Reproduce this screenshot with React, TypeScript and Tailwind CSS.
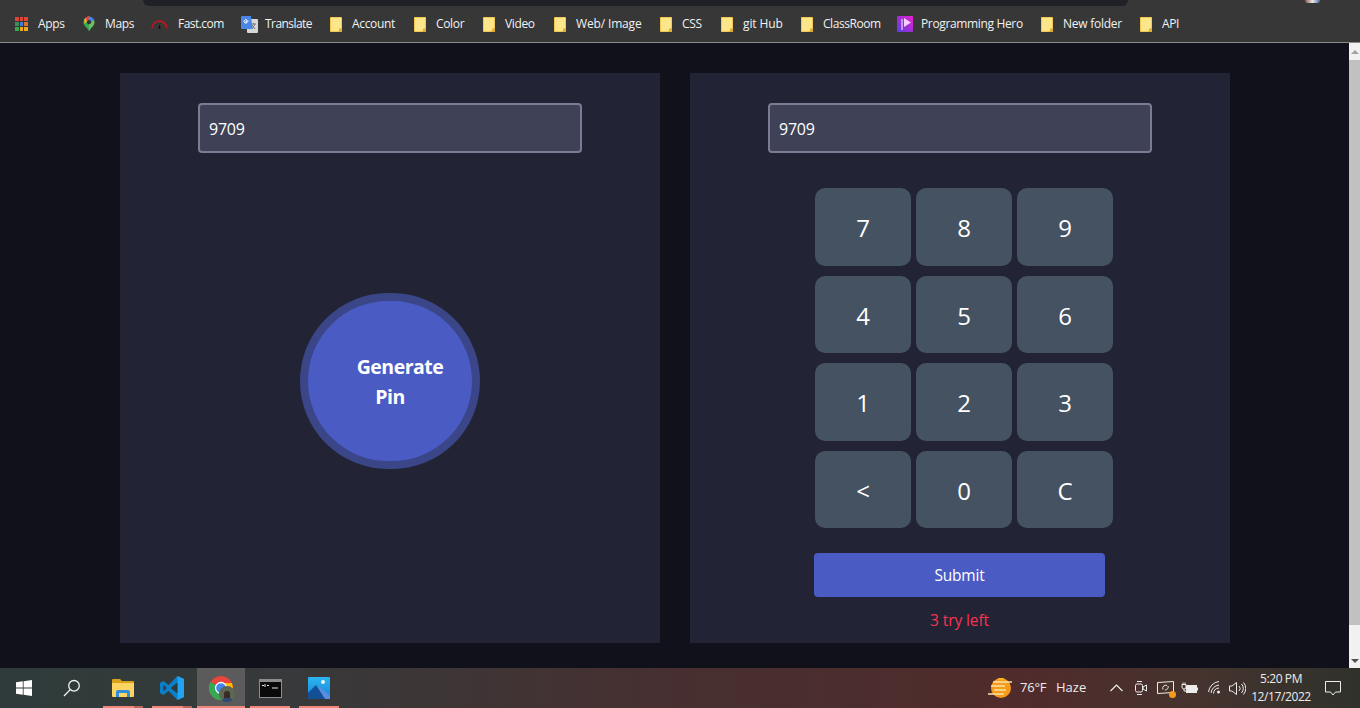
import type { ReactNode } from "react";

const FONT = "font-['Open_Sans','Noto_Sans',sans-serif]";

function FolderIcon() {
  return (
    <svg width="12" height="15" viewBox="0 0 12 15" className="shrink-0">
      <path d="M.5.5h11v11l-3 3H.5z" fill="#fde58a" stroke="#f4c84f" />
      <path d="M9 15v-3.500h3V15z" fill="#e2ad34" />
    </svg>
  );
}

function AppsIcon() {
  const colors = ["#d9473b", "#d9473b", "#d9473b", "#3f8a5c", "#3b7fdc", "#e0702e", "#34a853", "#f0a81e", "#f0a81e"];
  return (
    <div className="grid grid-cols-3 gap-px w-[13px] h-[14px] shrink-0">
      {colors.map((c, i) => (
        <span key={i} style={{ backgroundColor: c }} />
      ))}
    </div>
  );
}

function MapsIcon() {
  return (
    <svg width="12" height="16" viewBox="0 0 13 16" className="shrink-0">
      <path d="M6.500 0A6 6 0 0 0 .5 6c0 2 1 3.500 2.500 5.200 1.500 1.700 3 3 3.500 4.800L6.500 6z" fill="#34a853" />
      <path d="M6.500 16c.5-1.800 2-3.100 3.500-4.800C11.500 9.500 12.500 8 12.500 6c0-1-.3-2-.8-2.800L6.500 7z" fill="#6cbf5b" />
      <path d="M1.500 3A6 6 0 0 1 7 0l-.5 3.500L1.500 8z" fill="#f0b429" />
      <path d="M3 1a6 6 0 0 1 4-1l-.5 3.500L4 5z" fill="#e8453c" />
      <path d="M7 0a6 6 0 0 1 5 3.500L8 6 6 3z" fill="#4285f4" />
      <circle cx="6.500" cy="6" r="2.200" fill="#2f2f2f" />
    </svg>
  );
}

function FastIcon() {
  return (
    <svg width="17" height="10" viewBox="0 0 17 10" className="shrink-0">
      <path d="M1 9.500a7.500 7.500 0 0 1 15 0" fill="none" stroke="#c4161f" strokeWidth="1.500" />
      <path d="M10 2.500l1.500 1M12 4l1 1.500M13.500 6.500l.5 1" stroke="#c4161f" />
      <path d="M7.500 9.800 8.500 5l1 4.800z" fill="#0c0c0c" />
    </svg>
  );
}

function TranslateIcon() {
  return (
    <svg width="17" height="17" viewBox="0 0 17 17" className="shrink-0">
      <rect x="6" y="3" width="11" height="14" rx="1" fill="#d7d7d7" />
      <path d="M10 8h5M12.500 7v1M11 13l3-5M11 9l3 4" stroke="#777" fill="none" />
      <path d="M1 0h9l1.500 13H1a1 1 0 0 1-1-1V1a1 1 0 0 1 1-1z" fill="#4a86e8" />
      <path d="M7.500 5H5v1.200h1.300A1.700 1.700 0 1 1 6 4.200" stroke="#fff" strokeWidth="1" fill="none" />
    </svg>
  );
}

function HeroIcon() {
  return (
    <svg width="16" height="16" viewBox="0 0 16 16" className="shrink-0">
      <defs>
        <linearGradient id="hero" x1="0" y1="1" x2="1" y2="0">
          <stop offset="0" stopColor="#5b3fe0" />
          <stop offset="1" stopColor="#e81fd0" />
        </linearGradient>
      </defs>
      <rect width="16" height="16" rx="1" fill="url(#hero)" />
      <path d="M5 3v11" stroke="#e9d5ff" strokeWidth="1.200" />
      <path d="M7 2l7 4.500L7 11z" fill="#f5d0fe" />
    </svg>
  );
}

const bookmarks: { label: string; icon: ReactNode; cell: string; text: string }[] = [
  { label: "Apps", icon: <AppsIcon />, cell: "w-[68px]", text: "ml-[10px] tracking-[-0.35px]" },
  { label: "Maps", icon: <MapsIcon />, cell: "w-[68px]", text: "ml-[10px] tracking-[-0.35px]" },
  { label: "Fast.com", icon: <FastIcon />, cell: "w-[90px]", text: "ml-[10px] tracking-[-0.55px]" },
  { label: "Translate", icon: <TranslateIcon />, cell: "w-[89px]", text: "ml-[7px] tracking-[-0.55px]" },
  { label: "Account", icon: <FolderIcon />, cell: "w-[84px]", text: "ml-[10px] tracking-[-0.35px]" },
  { label: "Color", icon: <FolderIcon />, cell: "w-[69px]", text: "ml-[10px] tracking-[-0.35px]" },
  { label: "Video", icon: <FolderIcon />, cell: "w-[71px]", text: "ml-[10px] tracking-[-0.35px]" },
  { label: "Web/ Image", icon: <FolderIcon />, cell: "w-[106px]", text: "ml-[10px] tracking-[-0.15px]" },
  { label: "CSS", icon: <FolderIcon />, cell: "w-[61px]", text: "ml-[10px] tracking-[-0.35px]" },
  { label: "git Hub", icon: <FolderIcon />, cell: "w-[80px]", text: "ml-[10px] tracking-[-0.1px]" },
  { label: "ClassRoom", icon: <FolderIcon />, cell: "w-[96px]", text: "ml-[10px] tracking-[-0.45px]" },
  { label: "Programming Hero", icon: <HeroIcon />, cell: "w-[144px]", text: "ml-[8px] tracking-[-0.35px]" },
  { label: "New folder", icon: <FolderIcon />, cell: "w-[99px]", text: "ml-[10px] tracking-[-0.25px]" },
  { label: "API", icon: <FolderIcon />, cell: "w-[60px]", text: "ml-[10px] tracking-[-0.35px]" },
];

function TopBar() {
  return (
    <div className="shrink-0 bg-[#373737] border-b border-[#8c8c8c]">
      <div className="flex h-[6px]">
        <div className="ml-[143px] w-[985px] rounded-b-[10px] bg-[#202127]" />
        <div className="ml-[177px] w-[15px] h-[3px] rounded-b-full bg-[linear-gradient(90deg,#8a5a4a,#e8e8e8,#4a6aa8)]" />
      </div>
      <div className="flex items-center h-[36px] pl-[15px]">
        {bookmarks.map((b) => (
          <div key={b.label} className={`flex items-center shrink-0 ${b.cell}`}>
            {b.icon}
            <span className={`text-[12px] leading-none text-[#f1f1f1] whitespace-nowrap ${b.text}`}>{b.label}</span>
          </div>
        ))}
      </div>
    </div>
  );
}

function PinInput() {
  return (
    <input
      readOnly
      value="9709"
      className="w-[384px] h-[50px] pl-[9px] pr-[10px] pt-[2px] rounded-[4px] border-2 border-[#7c7b95] bg-[#3f4256] text-[16px] tracking-[-0.25px] text-white outline-none"
    />
  );
}

const keys = ["7", "8", "9", "4", "5", "6", "1", "2", "3", "<", "0", "C"];

function Panels() {
  return (
    <main className="flex-1 flex gap-[30px] pl-[120px] pt-[30px]">
      <section className="w-[540px] h-[570px] bg-[#222436] flex flex-col items-center pt-[30px]">
        <PinInput />
        <button className="mt-[140px] w-[180px] h-[176px] pt-[2px] rounded-full border-[8px] border-[#3a4687] bg-[#4a5bc4] text-white text-[19.5px] font-bold leading-[30px] tracking-[-0.5px] flex flex-col items-center justify-center">
          <span className="pl-5">Generate</span>
          <span>Pin</span>
        </button>
      </section>
      <section className="w-[540px] h-[570px] bg-[#222436] flex flex-col items-center pt-[30px]">
        <PinInput />
        <div className="mt-[35px] ml-2 grid grid-cols-[96px_96px_96px] auto-rows-[77.5px] gap-x-[5px] gap-y-[10px]">
          {keys.map((k) => (
            <button key={k} className="pt-[3px] rounded-[10px] bg-[#445261] text-white text-[24px] flex items-center justify-center">
              {k}
            </button>
          ))}
        </div>
        <button className="mt-[25px] mr-px w-[291px] h-[44px] pt-[2px] rounded-[4px] bg-[#4a5bc4] text-white text-[15.5px] tracking-[-0.2px]">
          Submit
        </button>
        <p className="mt-[11px] mr-px text-[15.5px] leading-[24px] tracking-[-0.1px] text-[#f8334f]">3 try left</p>
      </section>
    </main>
  );
}

function Scrollbar() {
  return (
    <div className="w-[11px] bg-[#f1f1f1] flex flex-col items-center shrink-0">
      <div className="h-[17px] flex items-center">
        <div className="w-0 h-0 border-x-[4px] border-x-transparent border-b-[4px] border-b-[#a3a3a3]" />
      </div>
      <div className="w-full h-[565px] bg-[#c1c1c1]" />
      <div className="flex-1 flex items-end pb-[5px]">
        <div className="w-0 h-0 border-x-[4px] border-x-transparent border-t-[4px] border-t-[#505050]" />
      </div>
    </div>
  );
}

function WindowsIcon() {
  return (
    <svg width="16" height="16" viewBox="0 0 16 16">
      <path d="M0 2.300 6.800 1.300v6.300H0zM7.600 1.200 16 0v7.600H7.600zM0 8.400h6.800v6.300L0 13.700zM7.600 8.400H16V16l-8.400-1.200z" fill="#fff" />
    </svg>
  );
}

function SearchIcon() {
  return (
    <svg width="18" height="18" viewBox="0 0 18 18" fill="none" stroke="#f2f2f2" strokeWidth="1.300">
      <circle cx="11" cy="6.800" r="5.300" />
      <path d="M7.200 10.600 1 17" />
    </svg>
  );
}

function ExplorerIcon() {
  return (
    <svg width="22" height="18" viewBox="0 0 22 18">
      <path d="M0 1a1 1 0 0 1 1-1h7l2 2h11a1 1 0 0 1 1 1v3H0z" fill="#d9a21b" />
      <path d="M0 4h22v13a1 1 0 0 1-1 1H1a1 1 0 0 1-1-1z" fill="#fcd462" />
      <path d="M4 18v-5a2 2 0 0 1 2-2h10a2 2 0 0 1 2 2v5h-3v-4H7v4z" fill="#2f8fd8" />
    </svg>
  );
}

function VsCodeIcon() {
  return (
    <svg width="24" height="24" viewBox="0 0 24 24">
      <path d="M17.500 0 24 3v18l-6.500 3-9-9-5 4L0 17V7l3.500-2 5 4z" fill="#0a7fcb" />
      <path d="M17.500 0 24 3v18l-6.500 3z" fill="#22a5f1" />
      <path d="M17.500 6.500v11L10.500 12z" fill="#2f3a3a" />
      <path d="m3.500 8.500 3 3.500-3 3.500z" fill="#2f3a3a" />
    </svg>
  );
}

function ChromeIcon() {
  return (
    <div className="relative w-[24px] h-[24px]">
      <svg width="24" height="24" viewBox="0 0 24 24">
        <circle cx="12" cy="12" r="12" fill="#e8453c" />
        <path d="M12 12 1.600 6A12 12 0 0 0 12 24l5-8z" fill="#34a853" />
        <path d="M12 7h10.800A12 12 0 0 1 12 24l5.200-9z" fill="#fbbc04" />
        <circle cx="12" cy="12" r="5.500" fill="#4285f4" stroke="#fff" strokeWidth="1.300" />
      </svg>
      <div className="absolute left-[10px] top-[10px] w-[16px] h-[16px] rounded-full bg-[#5c6650] flex flex-col items-center justify-end overflow-hidden">
        <div className="w-[6px] h-[7px] rounded-t-full bg-[#3a2a24]" />
        <div className="w-[11px] h-[4px] rounded-t-sm bg-[#2d4a78]" />
      </div>
    </div>
  );
}

function TerminalIcon() {
  return (
    <svg width="23" height="19" viewBox="0 0 23 19">
      <rect width="23" height="19" fill="#8d8d8d" />
      <rect x="1" y="3" width="21" height="15" fill="#0a0a0a" />
      <path d="M3 6.500h2M6 5v3M8 6.500h2M13 9h6" stroke="#e5e5e5" />
    </svg>
  );
}

function PhotosIcon() {
  return (
    <svg width="22" height="22" viewBox="0 0 22 22">
      <defs>
        <linearGradient id="sky" x1="0" y1="0" x2="0" y2="1">
          <stop offset="0" stopColor="#29b6f0" />
          <stop offset="1" stopColor="#1a82d8" />
        </linearGradient>
      </defs>
      <rect width="22" height="22" rx="1" fill="url(#sky)" />
      <circle cx="15" cy="5" r="2" fill="#eaf6ff" />
      <path d="M11 9l11 10v3H8z" fill="#5a8de0" />
      <path d="M0 16 8 8l9 14H1a1 1 0 0 1-1-1z" fill="#134f94" />
    </svg>
  );
}

function SunHaze() {
  return (
    <svg width="24" height="20" viewBox="0 0 24 20">
      <circle cx="13" cy="10" r="10" fill="#f59a1b" />
      <path d="M10 .5a10 10 0 0 1 6 0v1h-6z" fill="#fbc02d" />
      <path d="M5 4h19M3 8h14M6 12h12M0 16h16" stroke="#f8e3a6" strokeWidth="1.500" />
    </svg>
  );
}

const apps: { icon: ReactNode; active?: boolean; split?: boolean }[] = [
  { icon: <ExplorerIcon />, split: true },
  { icon: <VsCodeIcon />, split: true },
  { icon: <ChromeIcon />, active: true },
  { icon: <TerminalIcon /> },
  { icon: <PhotosIcon /> },
];

function Taskbar() {
  return (
    <footer className="h-[40px] shrink-0 flex bg-[linear-gradient(90deg,#2e3b3a_0%,#38393a_22%,#472f30_50%,#502b2b_75%,#45332e_88%,#2f322b_100%)] text-[#ececec]">
      <div className="w-[48px] flex items-center justify-center">
        <WindowsIcon />
      </div>
      <div className="w-[48px] flex items-center justify-center">
        <SearchIcon />
      </div>
      <div className="ml-[3px] flex gap-px">
        {apps.map((a, i) => (
          <div key={i} className={`w-[48px] flex flex-col ${a.active ? "bg-[#5c5b5b]" : ""}`}>
            <div className="flex-1 flex items-center justify-center pt-[2px]">{a.icon}</div>
            <div className={`h-[2px] flex justify-end bg-[#f0877a] ${a.active ? "" : "mx-1"}`}>
              {a.split && <div className="w-[9px] bg-[#b9685f]" />}
            </div>
          </div>
        ))}
      </div>
      <div className="ml-auto flex items-center">
        <SunHaze />
        <span className="ml-2 w-[27px] text-[13px] tracking-[-0.2px]">76°F</span>
        <span className="ml-[9px] w-[31px] text-[13px]">Haze</span>
        <svg width="13" height="8" viewBox="0 0 13 8" fill="none" stroke="#ececec" strokeWidth="1.200" className="ml-[23px]">
          <path d="m.5 7 6-6 6 6" />
        </svg>
        <svg width="12" height="16" viewBox="0 0 12 16" fill="none" stroke="#ececec" className="ml-[12px]">
          <rect x=".5" y="4" width="7" height="8" rx="1.500" />
          <path d="m8 7 3.500-2v6L8 9zM2 1.500h5M2 14.500h5" />
        </svg>
        <div className="relative ml-[10px] w-[18px] h-[15px]">
          <svg width="18" height="15" viewBox="0 0 18 15" fill="none" stroke="#ececec">
            <path d="M.5 1.500 16.500.5v11L.5 12.500z" />
            <path d="M6 8.500a3 3 0 0 1 4-4M11 5a3 3 0 0 1-3 4" />
          </svg>
          <div className="absolute right-[-1px] bottom-[-2px] w-[7px] h-[7px] rounded-full bg-[#f59a1b]" />
        </div>
        <svg width="17" height="12" viewBox="0 0 17 12" fill="none" stroke="#ececec" className="ml-[6px]">
          <rect x="5.500" y="3.500" width="10" height="7" fill="#ececec" />
          <path d="M16.500 5.500v3M1 2.500h4V5a2 2 0 0 1-4 0zM2 .5v2M4 .5v2M3 7v2h2" />
        </svg>
        <svg width="14" height="14" viewBox="0 0 14 14" fill="none" stroke="#ececec" className="ml-[10px]">
          <path d="M.5 11A12 12 0 0 1 11 .5M3 12a9 9 0 0 1 8-8M5.500 12.500A6 6 0 0 1 11 7" />
          <circle cx="10.500" cy="11" r="1.500" fill="#ececec" stroke="none" />
        </svg>
        <svg width="17" height="15" viewBox="0 0 17 15" fill="none" stroke="#ececec" className="ml-[7px]">
          <path d="M.5 5v5h2.500L7.500 13.500v-12L3 5z" />
          <path d="M10 5a3.500 3.500 0 0 1 0 5M12.500 3a6.500 6.500 0 0 1 0 9M14.500 1.500a9 9 0 0 1 0 12" />
        </svg>
        <div className="w-[70px] text-center text-[12px] leading-[18px] tracking-[-0.4px]">
          <div>5:20 PM</div>
          <div>12/17/2022</div>
        </div>
        <svg width="16" height="15" viewBox="0 0 16 15" fill="none" stroke="#ececec" className="ml-[9px] mr-[19px]">
          <path d="M.5.5h15v10.500h-5L8 14l-2.500-3h-5z" />
        </svg>
      </div>
    </footer>
  );
}

export default function App() {
  return (
    <div className={`h-screen overflow-hidden flex flex-col bg-[#10111a] ${FONT}`}>
      <TopBar />
      <div className="flex-1 flex min-h-0">
        <Panels />
        <Scrollbar />
      </div>
      <Taskbar />
    </div>
  );
}
